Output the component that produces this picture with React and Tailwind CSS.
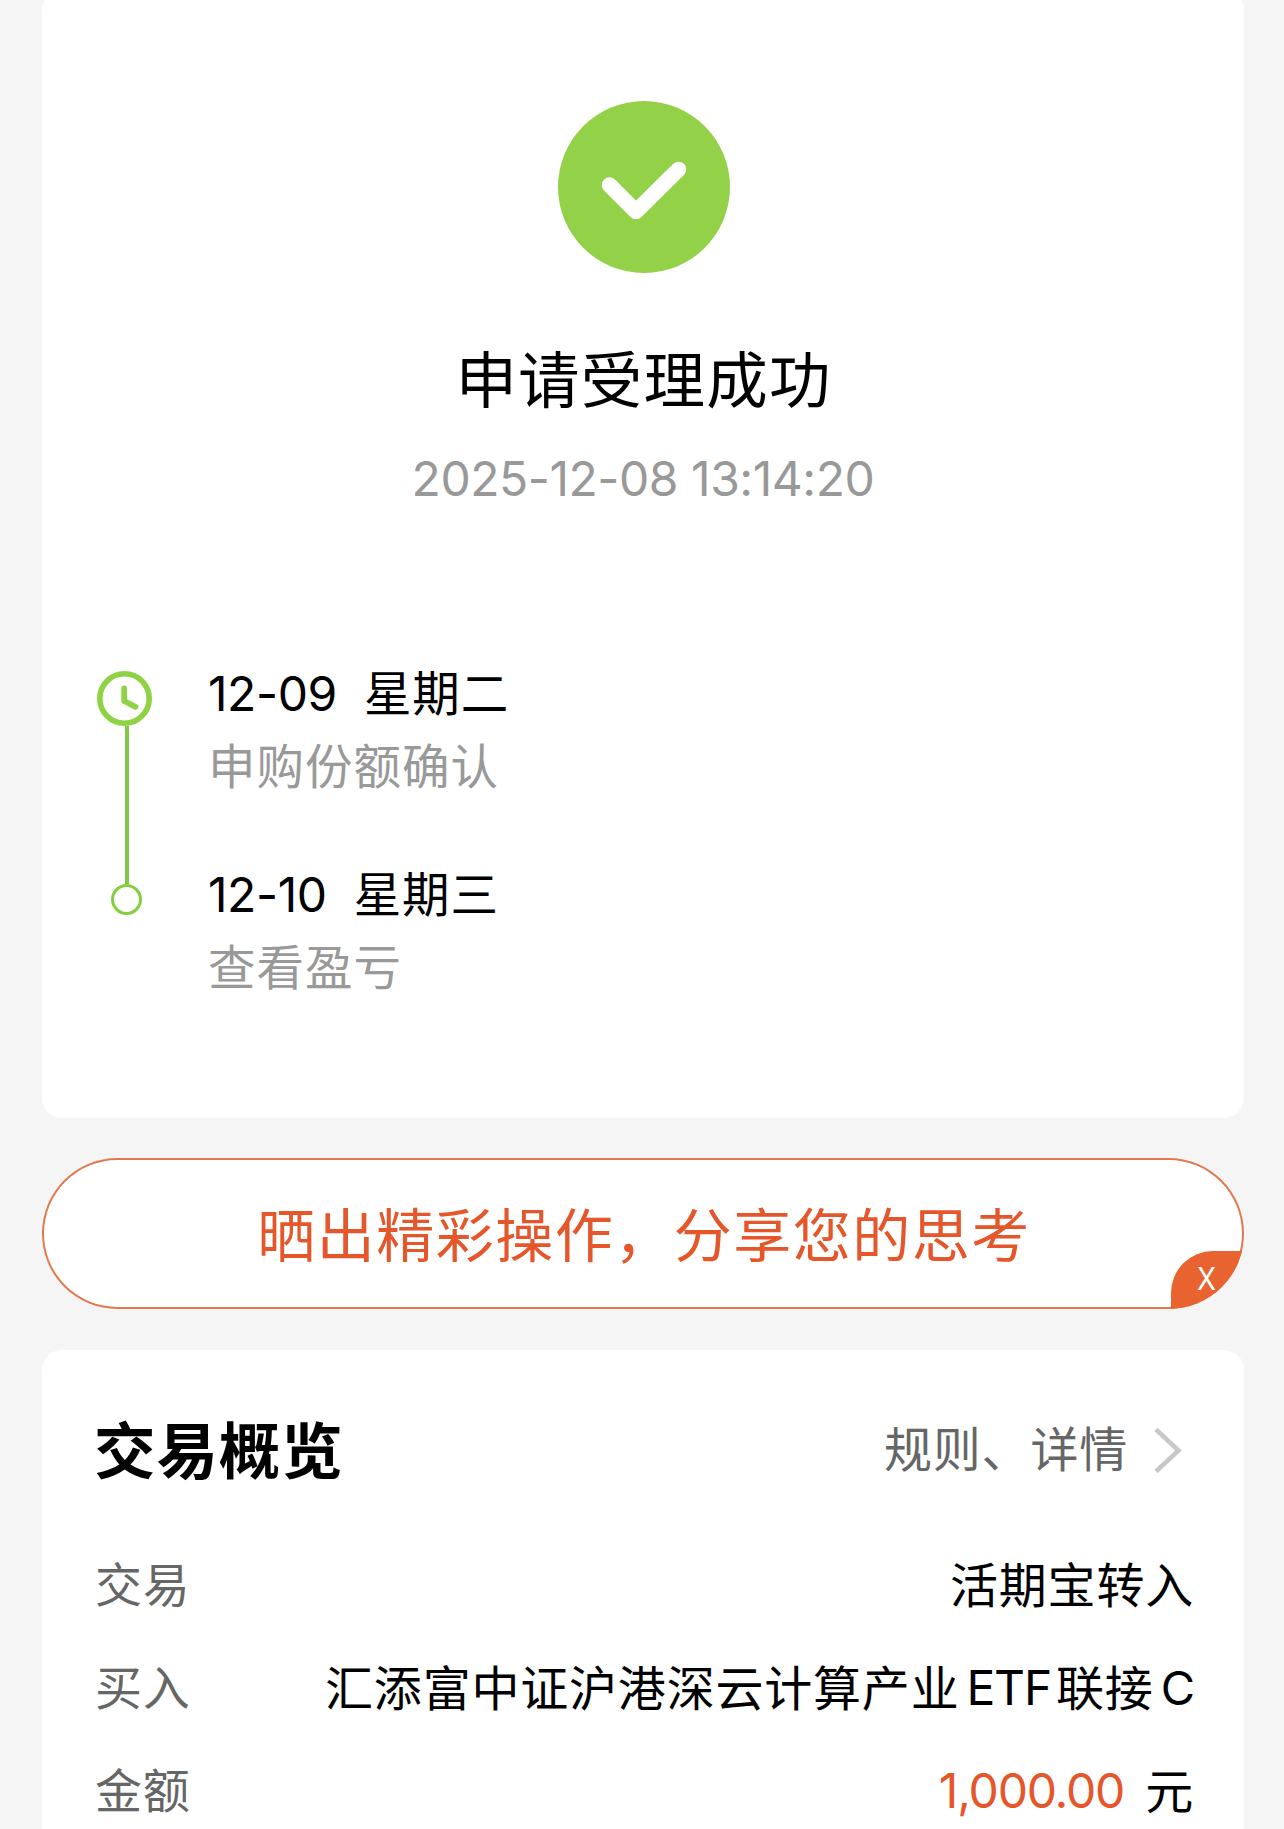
import React from "react";

function SuccessIcon() {
  return (
    <svg className="ml-[2px] block size-[172px]" viewBox="0 0 172 172" fill="none">
      <circle cx="86" cy="86" r="86" fill="#92d148" />
      <path d="M51.5 84 L78 110.5 L120.5 68.5" stroke="#fff" strokeWidth="15.5" strokeLinecap="round" strokeLinejoin="round" />
    </svg>
  );
}

function ClockIcon() {
  return (
    <svg className="block size-[55px]" viewBox="0 0 55 55" fill="none" stroke="#8fd345" strokeLinecap="round" strokeLinejoin="round">
      <circle cx="27.5" cy="27.5" r="24.7" strokeWidth="5.6" />
      <path d="M27.2 17.5 V30 L38.5 35.8" strokeWidth="5.8" />
    </svg>
  );
}

function Step({ date, day, note }) {
  return (
    <div className="h-[201px] text-[48px] leading-[72px]">
      <div className="flex text-black">
        <span className="tracking-[-0.4px]">{date}</span>
        <span className="ml-[27px] text-[47.5px] tracking-[0.9px]">{day}</span>
      </div>
      <div className="relative top-px text-[47.5px] tracking-[1px] text-[#999]">{note}</div>
    </div>
  );
}

function Row({ label, children }) {
  return (
    <div className="flex h-[103px] items-center justify-between text-[48px] tracking-[0.8px] whitespace-nowrap">
      <span className="text-[47px] text-[#666]">{label}</span>
      <span className="text-black">{children}</span>
    </div>
  );
}

export default function App() {
  return (
    <div className="h-[1829px] w-[1284px] overflow-hidden bg-[#f5f5f5] pl-[42px] font-['Inter','Noto_Sans_CJK_SC',sans-serif]">
      <div className="flex w-[1202px] flex-col">
        <section className="-mt-[10px] flex h-[1128px] flex-col items-center rounded-[20px] bg-white pt-[111px]">
          <SuccessIcon />
          <h1 className="mt-[68px] h-[80px] pl-px text-[61.5px] leading-[80px] tracking-[1.2px] text-black">申请受理成功</h1>
          <p className="mt-[28px] h-[60px] text-[48px] leading-[60px] tracking-[-0.45px] whitespace-nowrap text-[#999]">
            2025-12-08 13:14:20
          </p>
          <div className="mt-[149px] flex w-full pl-[55px]">
            <div className="flex w-[55px] flex-col items-start pt-[13px]">
              <ClockIcon />
              <div className="ml-[28px] h-[158px] w-[4px] bg-[#84c945]" />
              <div className="ml-[14px] size-[31px] rounded-full border-[3px] border-[#84ce40]" />
            </div>
            <div className="ml-[56px]">
              <Step date="12-09" day="星期二" note="申购份额确认" />
              <Step date="12-10" day="星期三" note="查看盈亏" />
            </div>
          </div>
        </section>

        <section className="relative mt-[40px] flex h-[151px] items-center justify-center overflow-hidden rounded-full bg-white pt-[5px] shadow-[inset_0_0_0_2px_#e0794e]">
          <span className="pl-[2px] text-[58px] leading-[80px] tracking-[1.5px] whitespace-nowrap text-[#e5572b]">
            晒出精彩操作，分享您的思考
          </span>
          <button className="absolute right-0 bottom-0 flex h-[58px] w-[73px] items-center rounded-tl-[42px] bg-[#e86330] pb-[3px] pl-[26px] text-[31px] leading-none font-normal text-white">
            <span className="inline-block origin-left scale-x-90">X</span>
          </button>
        </section>

        <section className="mt-[41px] h-[520px] rounded-[20px] bg-white pt-[60px] pr-[50px] pl-[53px]">
          <div className="flex h-[80px] items-center justify-between">
            <h2 className="-ml-px pt-[4px] text-[61.5px] leading-[80px] font-bold tracking-[0.9px] text-black">交易概览</h2>
            <div className="flex items-center pr-[11px] text-[48px] tracking-[0.8px] text-[#666]">
              <span>规则、详情</span>
              <svg className="ml-[25px] block h-[46px] w-[30px]" viewBox="0 0 30 46" fill="none">
                <path d="M3 2.5 L25.5 23.5 L3 44.5" stroke="#c8c8c8" strokeWidth="4.5" />
              </svg>
            </div>
          </div>
          <div className="mt-[44px]">
            <Row label="交易">活期宝转入</Row>
            <Row label="买入">
              汇添富中证沪港深云计算产业<span className="relative -top-px mr-[5px] ml-[7px] tracking-[-1.2px]">ETF</span>联接
              <span className="relative -top-px ml-[7px] text-[47px] tracking-[-1px]">C</span>
            </Row>
            <Row label="金额">
              <span className="relative -top-px mr-[21px] tracking-[-1.2px] text-[#e5572b]">1,000.00</span>元
            </Row>
          </div>
        </section>
      </div>
    </div>
  );
}
